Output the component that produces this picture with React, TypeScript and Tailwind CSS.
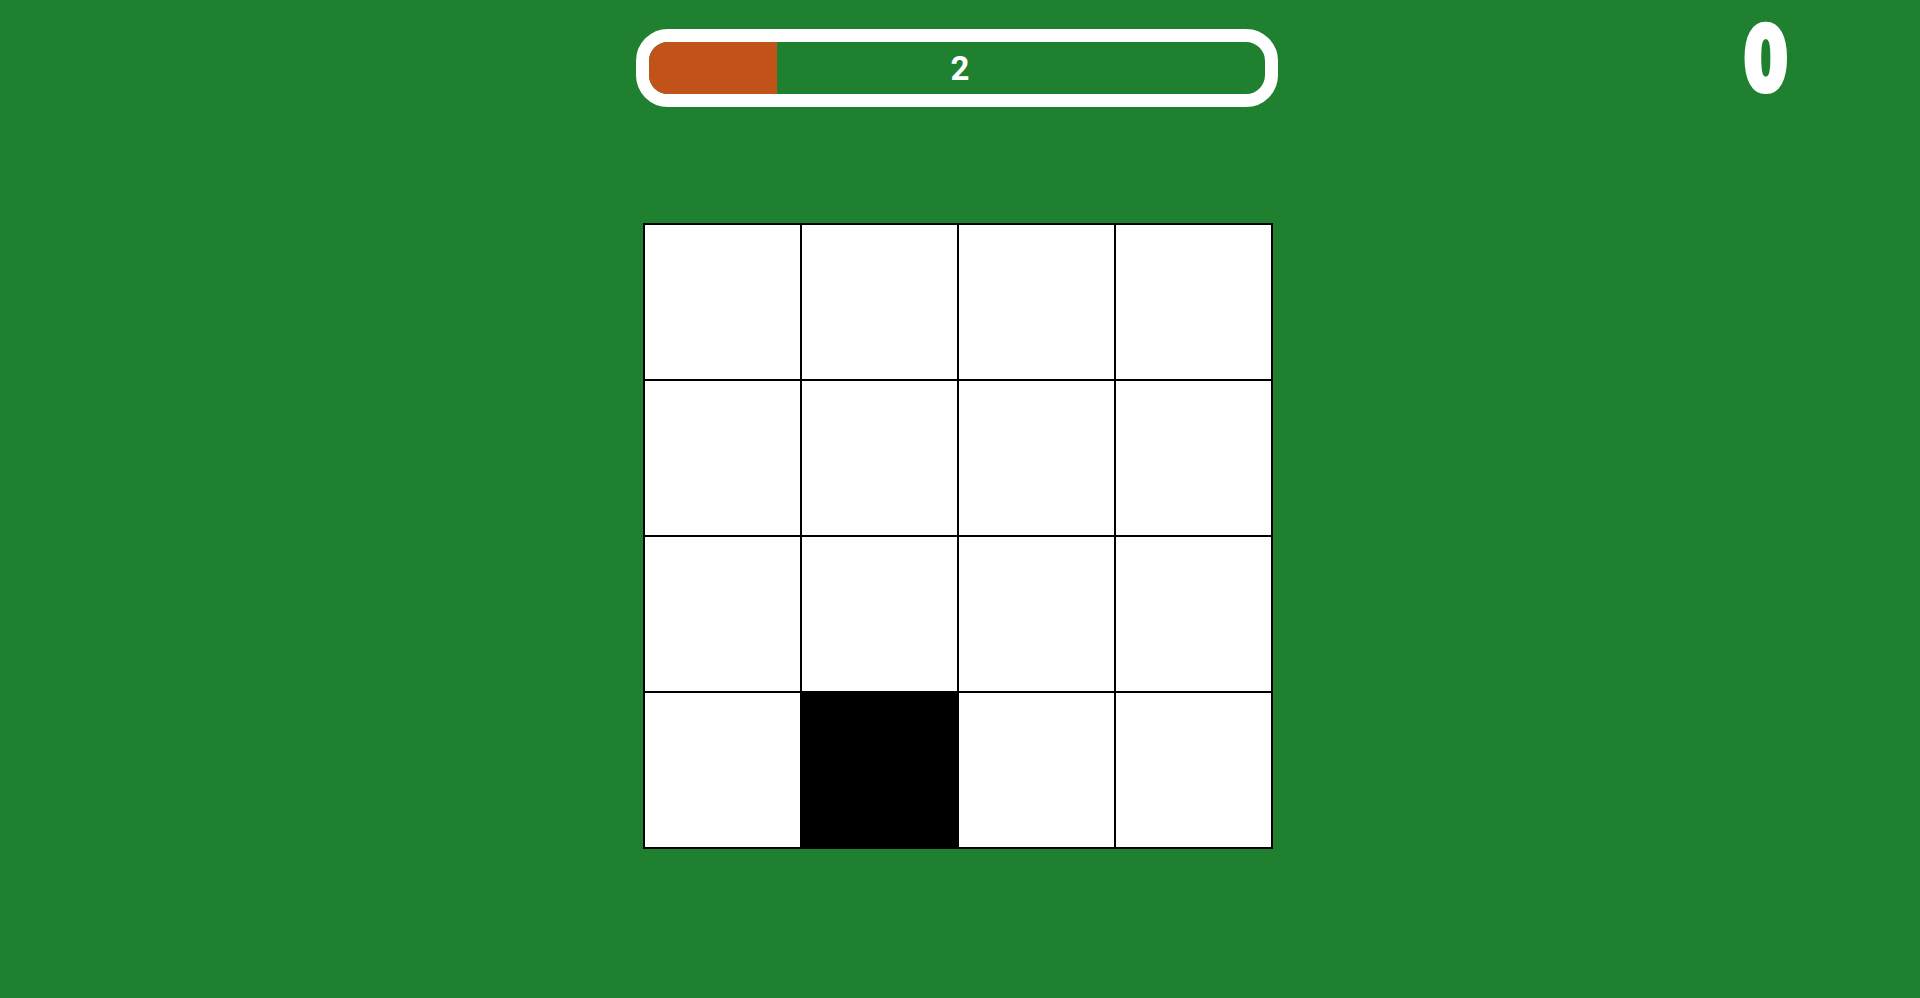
import React from "react";

export default function App() {
  const cells = Array.from({ length: 16 }, (_, i) => i);
  return (
    <div className="min-h-screen w-full bg-[#1f8030] font-['Liberation_Sans',Arial,sans-serif]">
      <div className="grid grid-cols-[calc(50%-324px)_642px_1fr] pt-[29px]">
        <div />
        <div className="h-[78px] rounded-[32px] border-[13px] border-white">
          <div className="relative flex h-full w-full items-center justify-center overflow-hidden rounded-[19px] pl-[6px]">
            <div className="absolute left-0 top-0 h-full w-[128px] bg-[#c1521a]" />
            <span className="relative font-['Roboto',sans-serif] text-[33px] font-bold leading-none text-white">2</span>
          </div>
        </div>
        <div className="flex justify-end pr-[133px]">
          <span className="-mt-[12px] origin-top-right scale-x-[0.8] font-['DejaVu_Sans_Condensed','DejaVu_Sans',sans-serif] text-[87px] font-bold leading-none text-white [-webkit-text-stroke:6px_white]">
            0
          </span>
        </div>
      </div>
      <div className="mt-[116px] flex justify-center">
        <div className="ml-[-4px] grid w-[630px] grid-cols-4 border-l-2 border-t-2 border-black">
          {cells.map((i) => (
            <div
              key={i}
              className={
                "h-[156px] border-b-2 border-r-2 border-black " +
                (i === 13 ? "bg-black" : "bg-white")
              }
            />
          ))}
        </div>
      </div>
    </div>
  );
}
